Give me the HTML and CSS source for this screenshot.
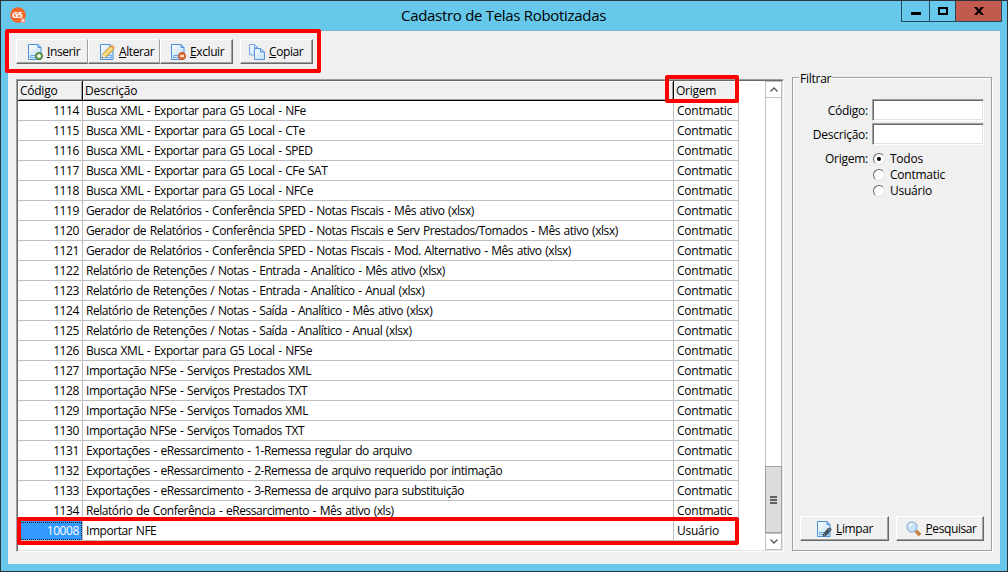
FILE: index.html
```html
<!DOCTYPE html>
<html lang="pt-BR">
<head>
  <meta charset="UTF-8">
  <title>Cadastro de Telas Robotizadas</title>
  <link rel="stylesheet" href="styles.css">
</head>
<body>

<svg width="0" height="0" class="defs">
  <defs>
    <linearGradient id="paper" x1="0" y1="0" x2="1" y2="1">
      <stop offset="0" stop-color="#fafdff"/>
      <stop offset="1" stop-color="#bcdcf8"/>
    </linearGradient>
    <symbol id="page" viewBox="0 0 16 16">
      <path d="M1.500.500H11l3 3v12H1.500z" fill="url(#paper)" stroke="#4d8fd3"/>
      <path d="M11 .5v3h3" fill="#8fc0f0" stroke="#4d8fd3"/>
      <path d="M3.500 11.500h9v2h-9z" fill="#d9ecfc" stroke="#6aa9e6"/>
    </symbol>
  </defs>
</svg>

<div class="window">
  <header class="titlebar">
    <svg class="logo" width="17" height="17" viewBox="0 0 17 17">
      <circle cx="8" cy="8" r="7.800" fill="#f4652a"/>
      <text x="2" y="11" textLength="11">G5</text>
      <circle cx="13" cy="13.500" r="2.500" fill="#eda08c"/>
      <circle cx="13" cy="13.500" r="1" fill="#fff"/>
    </svg>
    <h1>Cadastro de Telas Robotizadas</h1>
    <div class="controls">
      <span class="control min"><svg width="10" height="9"><path d="M0 5h10v3H0z"/></svg></span>
      <span class="control max"><svg width="10" height="8"><path d="M1 1h8v6H1z" fill="none" stroke="#000" stroke-width="2"/></svg></span>
      <span class="control close"><svg width="10" height="8"><path d="M0 0h3l2 2.500L7 0h3L6.600 4 10 8H7L5 5.500 3 8H0l3.400-4z"/></svg></span>
    </div>
  </header>

  <main class="client">
    <div class="toolbar">
      <div class="group">
        <button class="tool"><svg width="16" height="16" viewBox="0 0 16 16"><use href="#page"/><circle cx="12" cy="12" r="3.500" fill="#6eae57" stroke="#44783a"/><path d="M12 10v4M10 12h4" stroke="#fff" stroke-width="1.300"/></svg><span><u>I</u>nserir</span></button>
        <button class="tool"><svg width="16" height="16" viewBox="0 0 16 16"><use href="#page"/><path d="M4 9.500 11.500 2l3.500 3L7.500 12.500 3 14z" fill="#f8cf63" stroke="#bd842b" stroke-width=".8"/><path d="M5.500 11 13 3.500" stroke="#fff0b0"/><path d="m11.500 2 1.500-1.500 3 3L15 5z" fill="#e8a85b"/><path d="m3 14 1-3.500L6.500 13z" fill="#fff"/><path d="m3 14 .5-1.500 1 1z" fill="#333"/></svg><span><u>A</u>lterar</span></button>
        <button class="tool"><svg width="16" height="16" viewBox="0 0 16 16"><use href="#page"/><circle cx="12" cy="12" r="3.500" fill="#ec7338" stroke="#b84d20"/><path d="M10 12h4" stroke="#fff" stroke-width="1.500"/></svg><span><u>E</u>xcluir</span></button>
      </div>
      <div class="group">
        <button class="tool copy"><svg width="16" height="16" viewBox="0 0 16 16"><path d="M.5.500h5l3 3v7.500h-8z" fill="url(#paper)" stroke="#79a9e0"/><path d="M5.500.500v3h3" fill="none" stroke="#79a9e0"/><path d="M5.500 4.500h6l4 3.500v7.500h-10z" fill="url(#paper)" stroke="#5b91d6"/><path d="M11.500 4.500V8h4" fill="none" stroke="#5b91d6"/></svg><span><u>C</u>opiar</span></button>
      </div>
    </div>

    <div class="content">
      <div class="grid">
        <table>
          <colgroup><col class="c-code"><col class="c-desc"><col class="c-origin"></colgroup>
          <thead><tr><th>Código</th><th>Descrição</th><th>Origem</th></tr></thead>
          <tbody>
            <tr><td>1114</td><td>Busca XML - Exportar para G5 Local - NFe</td><td>Contmatic</td></tr>
            <tr><td>1115</td><td>Busca XML - Exportar para G5 Local - CTe</td><td>Contmatic</td></tr>
            <tr><td>1116</td><td>Busca XML - Exportar para G5 Local - SPED</td><td>Contmatic</td></tr>
            <tr><td>1117</td><td>Busca XML - Exportar para G5 Local - CFe SAT</td><td>Contmatic</td></tr>
            <tr><td>1118</td><td>Busca XML - Exportar para G5 Local - NFCe</td><td>Contmatic</td></tr>
            <tr><td>1119</td><td>Gerador de Relatórios - Conferência SPED - Notas Fiscais - Mês ativo (xlsx)</td><td>Contmatic</td></tr>
            <tr><td>1120</td><td>Gerador de Relatórios - Conferência SPED - Notas Fiscais e Serv Prestados/Tomados - Mês ativo (xlsx)</td><td>Contmatic</td></tr>
            <tr><td>1121</td><td>Gerador de Relatórios - Conferência SPED - Notas Fiscais - Mod. Alternativo - Mês ativo (xlsx)</td><td>Contmatic</td></tr>
            <tr><td>1122</td><td>Relatório de Retenções / Notas - Entrada - Analítico - Mês ativo (xlsx)</td><td>Contmatic</td></tr>
            <tr><td>1123</td><td>Relatório de Retenções / Notas - Entrada - Analítico - Anual (xlsx)</td><td>Contmatic</td></tr>
            <tr><td>1124</td><td>Relatório de Retenções / Notas - Saída - Analítico - Mês ativo (xlsx)</td><td>Contmatic</td></tr>
            <tr><td>1125</td><td>Relatório de Retenções / Notas - Saída - Analítico - Anual (xlsx)</td><td>Contmatic</td></tr>
            <tr><td>1126</td><td>Busca XML - Exportar para G5 Local - NFSe</td><td>Contmatic</td></tr>
            <tr><td>1127</td><td>Importação NFSe - Serviços Prestados XML</td><td>Contmatic</td></tr>
            <tr><td>1128</td><td>Importação NFSe - Serviços Prestados TXT</td><td>Contmatic</td></tr>
            <tr><td>1129</td><td>Importação NFSe - Serviços Tomados XML</td><td>Contmatic</td></tr>
            <tr><td>1130</td><td>Importação NFSe - Serviços Tomados TXT</td><td>Contmatic</td></tr>
            <tr><td>1131</td><td>Exportações - eRessarcimento - 1-Remessa regular do arquivo</td><td>Contmatic</td></tr>
            <tr><td>1132</td><td>Exportações - eRessarcimento - 2-Remessa de arquivo requerido por intimação</td><td>Contmatic</td></tr>
            <tr><td>1133</td><td>Exportações - eRessarcimento - 3-Remessa de arquivo para substituição</td><td>Contmatic</td></tr>
            <tr><td>1134</td><td>Relatório de Conferência - eRessarcimento - Mês ativo (xls)</td><td>Contmatic</td></tr>
            <tr class="selected"><td>10008</td><td>Importar NFE</td><td>Usuário</td></tr>
          </tbody>
        </table>
        <div class="scrollbar">
          <span class="arrow"><svg width="8" height="5"><path d="M.5 4.500 4 1l3.500 3.500" fill="none" stroke="#555" stroke-width="1.300"/></svg></span>
          <span class="track"></span>
          <span class="thumb"><svg width="7" height="8"><path d="M0 1h7M0 4h7M0 7h7" stroke="#606060" stroke-width="2"/></svg></span>
          <span class="arrow"><svg width="8" height="5"><path d="M.5.500 4 4 7.500.500" fill="none" stroke="#555" stroke-width="1.300"/></svg></span>
        </div>
      </div>

      <section class="filter">
        <h2>Filtrar</h2>
        <div class="field"><label for="codigo">Código:</label><input id="codigo" type="text"></div>
        <div class="field"><label for="descricao">Descrição:</label><input id="descricao" type="text"></div>
        <div class="field origin">
          <label>Origem:</label>
          <div class="radios">
            <span class="radio on"><i></i>Todos</span>
            <span class="radio"><i></i>Contmatic</span>
            <span class="radio"><i></i>Usuário</span>
          </div>
        </div>
        <div class="actions">
          <button class="tool"><svg width="16" height="16" viewBox="0 0 16 16"><use href="#page"/><path d="m7 14 5-6q2-1.500 3 .5l-5.500 6q-2 1-2.500-.5m2-1 4-4" fill="none" stroke="#46515c" stroke-width="1.300"/></svg><span><u>L</u>impar</span></button>
          <button class="tool search"><svg width="16" height="16" viewBox="0 0 16 16"><path d="m9 9 5 5" stroke="#b87735" stroke-width="3.500"/><path d="m9.500 9 3.500 3.500" stroke="#e6b16d"/><circle cx="6" cy="6" r="5" fill="#c8e4fb" stroke="#a3bddb" stroke-width="1.500"/><path d="M3 5.500Q4 3 6.500 3" fill="none" stroke="#fff" stroke-width="1.500"/></svg><span><u>P</u>esquisar</span></button>
        </div>
      </section>
    </div>
  </main>

  <!-- highlight frames over the buttons, the column and the row -->
  <div class="mark mark-toolbar"></div>
  <div class="mark mark-origin"></div>
  <div class="mark mark-row"></div>
</div>

</body>
</html>
```
FILE: styles.css
```css
* {
  box-sizing: border-box;
}

body {
  margin: 0;
  font-family: "Open Sans", "Noto Sans", sans-serif;
  font-size: 12px;
  letter-spacing: -0.25px;
  color: #000;
}

svg {
  display: block;
  flex: none;
}

.defs {
  position: absolute;
}

.window {
  position: relative;
  width: 1008px;
  height: 572px;
  border: 1px solid #2d3338;
  background: #66c9eb;
  padding: 0 7px 7px;
  overflow: hidden;
}

.titlebar {
  display: flex;
  height: 29px;
  padding-left: 2px;
}

.logo {
  margin-top: 6px;
}

.logo text {
  font-size: 9px;
  font-weight: bold;
  fill: #fff;
  letter-spacing: 0;
}

.titlebar h1 {
  flex: 1;
  margin: 0;
  padding-left: 374px;
  font-size: 15px;
  font-weight: normal;
  line-height: 29px;
  letter-spacing: -0.3px;
  white-space: nowrap;
}

.controls {
  display: flex;
  height: 21px;
  margin-right: -2px;
}

.control {
  display: flex;
  justify-content: center;
  align-items: center;
  width: 26px;
  border: solid #24495a;
  border-width: 0 0 1px 1px;
}

.control.min {
  width: 28px;
}

.control.close {
  width: 47px;
  background: #c35a50;
  border-right-width: 1px;
}

.client {
  height: 534px;
  padding: 8px 8px 0;
  background: #f0f0f0;
  border-top: 1px solid #81b5cb;
}

.toolbar {
  display: flex;
  gap: 7px;
  height: 40px;
}

.group {
  display: flex;
  height: 25px;
}

.tool {
  display: flex;
  align-items: center;
  gap: 4px;
  width: 73px;
  height: 25px;
  padding: 0 0 0 10px;
  border: 1px solid;
  border-color: #fff #696969 #696969 #fff;
  box-shadow: inset -1px -1px #a0a0a0;
  background: #f0f0f0;
  font: inherit;
  letter-spacing: -0.4px;
  color: #000;
  white-space: nowrap;
}

.group .tool:not(:last-child) {
  width: 72px;
  border-right-color: #a0a0a0;
  box-shadow: inset 0 -1px #a0a0a0;
}

.group .tool:last-child:not(.copy) {
  padding-left: 9px;
}

.tool.copy {
  padding-left: 8px;
}

.content {
  display: flex;
  gap: 8px;
  height: 474px;
}

.grid {
  display: flex;
  justify-content: space-between;
  width: 768px;
  height: 473px;
  padding: 1px;
  border: 1px solid;
  border-color: #a0a0a0 #fff #fff #a0a0a0;
  box-shadow: inset 1px 1px #696969, inset -1px -1px #e3e3e3;
  background: #fff;
}

table {
  width: 721px;
  height: 460px;
  table-layout: fixed;
  border-collapse: separate;
  border-spacing: 0;
}

.c-code {
  width: 65px;
}

.c-desc {
  width: 591px;
}

.c-origin {
  width: 65px;
}

th,
td {
  height: 20px;
  padding: 0 3px;
  border-right: 1px solid #c0c0c0;
  border-bottom: 1px solid #c0c0c0;
  line-height: 19px;
  white-space: nowrap;
}

th {
  padding: 0 2px;
  background: #f0f0f0;
  border-color: #000;
  box-shadow: inset 1px 1px #fff, inset -1px -1px #a0a0a0;
  font-weight: normal;
  text-align: left;
}

td:first-child {
  letter-spacing: -0.4px;
  text-align: right;
}

td:nth-child(2) {
  letter-spacing: -0.45px;
  word-spacing: 0.95px;
}

.selected td:first-child {
  background: #3399ff;
  outline: 1px dotted #222;
  outline-offset: -2px;
  color: #fff;
}

.scrollbar {
  display: flex;
  flex-direction: column;
  width: 17px;
  border: solid #c0c0c0;
  border-width: 0 1px;
}

.arrow,
.thumb {
  display: flex;
  align-items: center;
  justify-content: center;
}

.arrow {
  height: 17px;
  border: solid #c0c0c0;
  border-width: 1px 0;
}

.track {
  flex: 1;
}

.thumb {
  height: 67px;
  margin: 0 -1px;
  background: #dcdcdc;
  border: 1px solid #a0a0a0;
}

.filter {
  display: flex;
  flex-direction: column;
  width: 200px;
  height: 474px;
  margin-top: -2px;
  padding: 0 7px 9px;
  border: 1px solid #a0a0a0;
  box-shadow: 1px 1px #fff, inset 1px 1px #fff;
}

.filter h2 {
  align-self: flex-start;
  height: 16px;
  margin: -7px 0 12px -1px;
  padding: 0 1px;
  background: #f0f0f0;
  font-size: 12px;
  font-weight: normal;
  line-height: 16px;
}

.field {
  display: flex;
  height: 22px;
  margin-bottom: 2px;
}

.field label {
  width: 72px;
  padding-right: 4px;
  line-height: 24px;
  text-align: right;
}

.field input {
  width: 112px;
  height: 22px;
  border: 1px solid;
  border-color: #a0a0a0 #fff #fff #a0a0a0;
  box-shadow: inset 1px 1px #696969, inset -1px -1px #e3e3e3;
  background: #fff;
}

.field.origin {
  margin-top: 3px;
}

.origin label {
  line-height: 18px;
}

.radios {
  padding-top: 1px;
}

.radio {
  display: flex;
  align-items: center;
  gap: 5px;
  height: 16px;
  padding-left: 1px;
  line-height: 16px;
}

.radio i {
  display: flex;
  width: 12px;
  height: 12px;
  border: 1px solid;
  border-color: #666 #e3e3e3 #e3e3e3 #666;
  border-radius: 50%;
  background: #fff;
}

.radio.on i::after {
  content: "";
  width: 4px;
  height: 4px;
  margin: auto;
  border-radius: 50%;
  background: #000;
}

.actions {
  display: flex;
  gap: 7px;
  margin-top: auto;
}

.actions .tool {
  width: 89px;
  padding-left: 15px;
}

.actions .search {
  padding-left: 9px;
}

.mark {
  position: absolute;
  border: 4px solid #f00;
  border-radius: 2px;
}

.mark-toolbar {
  left: 4px;
  top: 28px;
  width: 316px;
  height: 44px;
}

.mark-origin {
  left: 664px;
  top: 74px;
  width: 74px;
  height: 28px;
}

.mark-row {
  left: 16px;
  top: 516px;
  width: 722px;
  height: 28px;
}
```
